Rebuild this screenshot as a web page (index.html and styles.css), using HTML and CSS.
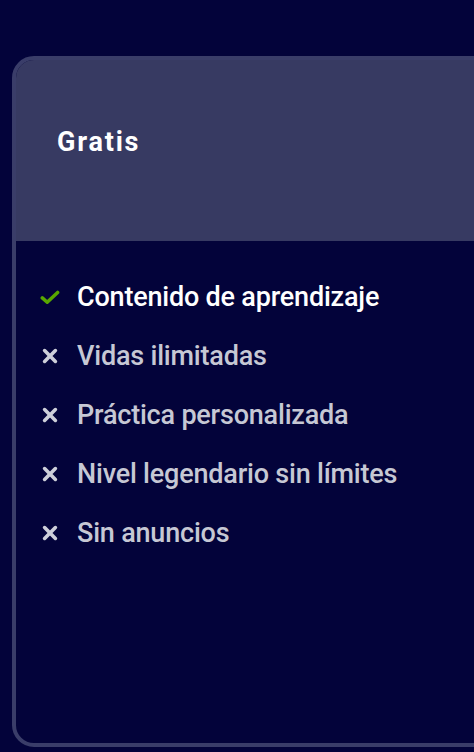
FILE: index.html
```html
<!DOCTYPE html>
<html lang="es">
<head>
<meta charset="utf-8">
<link rel="stylesheet" href="styles.css">
</head>
<body>
<div class="page">
  <section class="card">
    <header class="card-head">
      <h2 class="title">Gratis</h2>
    </header>
    <ul class="features">
      <li class="feature on">
        <span class="slot"><svg class="icon" viewBox="0 0 20 15" width="20" height="15"><path d="M2.3 7.9 L7.2 12.2 L17.6 2.4" fill="none" stroke="#58a700" stroke-width="3.5" stroke-linecap="round" stroke-linejoin="round"/></svg></span>
        <span>Contenido de aprendizaje</span>
      </li>
      <li class="feature off">
        <span class="slot"><svg class="icon" viewBox="0 0 16 16" width="16" height="16"><path d="M2.6 2.6 L13.4 13.4 M13.4 2.6 L2.6 13.4" fill="none" stroke="#cdcfd9" stroke-width="3.6" stroke-linecap="round"/></svg></span>
        <span>Vidas ilimitadas</span>
      </li>
      <li class="feature off">
        <span class="slot"><svg class="icon" viewBox="0 0 16 16" width="16" height="16"><path d="M2.6 2.6 L13.4 13.4 M13.4 2.6 L2.6 13.4" fill="none" stroke="#cdcfd9" stroke-width="3.6" stroke-linecap="round"/></svg></span>
        <span>Práctica personalizada</span>
      </li>
      <li class="feature off">
        <span class="slot"><svg class="icon" viewBox="0 0 16 16" width="16" height="16"><path d="M2.6 2.6 L13.4 13.4 M13.4 2.6 L2.6 13.4" fill="none" stroke="#cdcfd9" stroke-width="3.6" stroke-linecap="round"/></svg></span>
        <span>Nivel legendario sin límites</span>
      </li>
      <li class="feature off">
        <span class="slot"><svg class="icon" viewBox="0 0 16 16" width="16" height="16"><path d="M2.6 2.6 L13.4 13.4 M13.4 2.6 L2.6 13.4" fill="none" stroke="#cdcfd9" stroke-width="3.6" stroke-linecap="round"/></svg></span>
        <span>Sin anuncios</span>
      </li>
    </ul>
  </section>
</div>
</body>
</html>
```
FILE: styles.css
```css
html, body {
  margin: 0;
  padding: 0;
  background: #03033a;
  overflow: hidden;
}
.page {
  width: 474px;
  height: 752px;
  padding: 56px 0 0 12px;
  box-sizing: border-box;
  overflow: hidden;
  font-family: Roboto, "Liberation Sans", sans-serif;
}
.card {
  width: 640px;
  height: 691px;
  box-sizing: border-box;
  border: 4px solid #3a3d69;
  border-radius: 22px;
  background: #03033a;
  overflow: hidden;
}
.card-head {
  height: 181px;
  background: #373a62;
  padding: 69px 0 0 41px;
  box-sizing: border-box;
}
.title {
  margin: 0;
  color: #ffffff;
  font-size: 27px;
  line-height: 27px;
  font-weight: 700;
  letter-spacing: 1.8px;
}
.features {
  list-style: none;
  margin: 0;
  padding: 42px 0 0 23px;
  display: flex;
  flex-direction: column;
  gap: 31px;
}
.feature {
  display: flex;
  align-items: center;
  gap: 16px;
  font-size: 27px;
  line-height: 28px;
  font-weight: 500;
  letter-spacing: -0.2px;
}
.slot {
  flex: none;
  width: 22px;
  display: flex;
  justify-content: center;
  align-items: center;
}
.feature.on {
  color: #ffffff;
}
.feature.off {
  color: #c6c8d4;
}
```
